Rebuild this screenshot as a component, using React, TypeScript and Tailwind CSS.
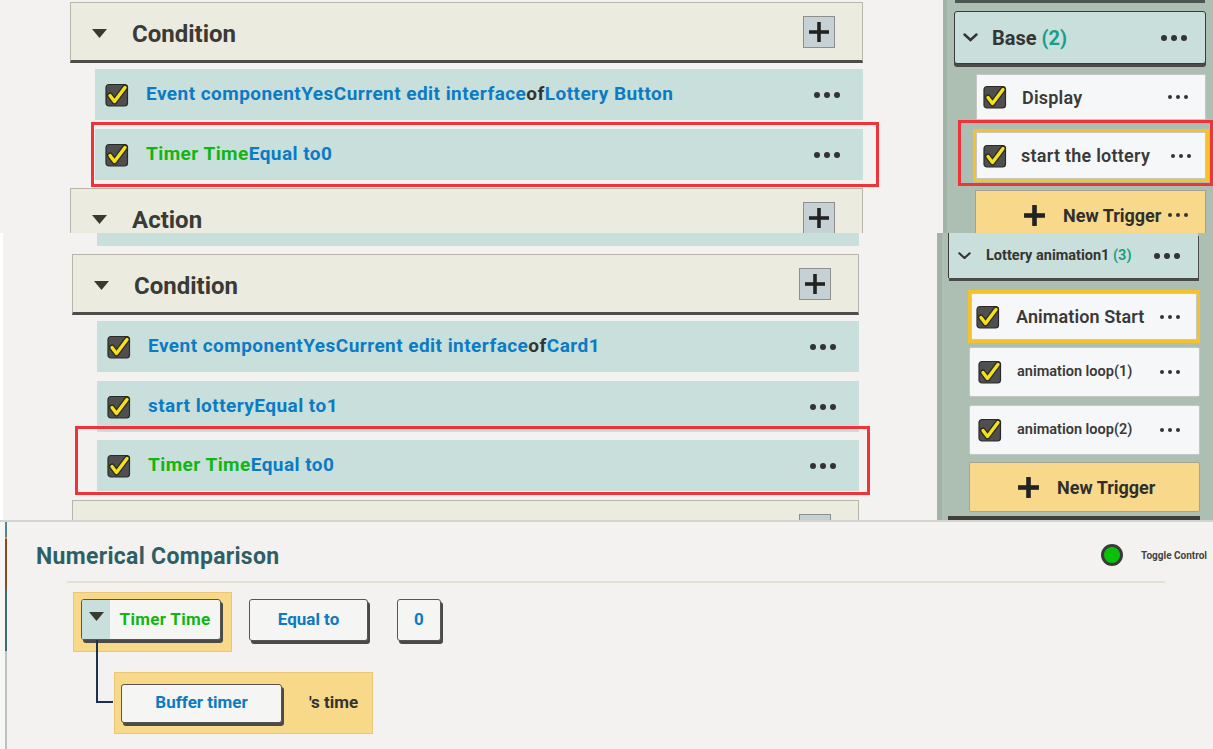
import React from 'react';

const FONT = "font-['Roboto','Liberation_Sans',sans-serif]";

const Check = ({ size = 24 }: { size?: number }) => (
    <svg width={size} height={size} viewBox="0 0 24 24" className="shrink-0">
        <rect x="1" y="1.5" width="21.5" height="21.5" rx="3" fill="#4f4f4f" stroke="#2a2a2a" strokeWidth="1.2" />
        <polyline points="5,12.5 9.5,18.5 20,4.5" fill="none" stroke="#2b2b20" strokeWidth="6" strokeLinecap="round" strokeLinejoin="round" />
        <polyline points="5,12.5 9.5,18.5 20,4.5" fill="none" stroke="#f4e11c" strokeWidth="3.4" strokeLinecap="round" strokeLinejoin="round" />
    </svg>
);

const Dots = ({ size = 6, gap = 4 }: { size?: number; gap?: number }) => (
    <div className="flex items-center" style={{ gap }}>
        {[0, 1, 2].map((i) => (
            <div key={i} className="rounded-full bg-[#333333]" style={{ width: size, height: size }} />
        ))}
    </div>
);

const Plus = ({ size = 22, stroke = 3.6 }: { size?: number; stroke?: number }) => (
    <svg width={size} height={size} viewBox="0 0 22 22" className="shrink-0">
        <line x1="11" y1="1" x2="11" y2="21" stroke="#222" strokeWidth={stroke} />
        <line x1="1" y1="11" x2="21" y2="11" stroke="#222" strokeWidth={stroke} />
    </svg>
);

const Triangle = () => (
    <svg width="15" height="9" viewBox="0 0 15 9" className="shrink-0">
        <polygon points="0,0 15,0 7.5,9" fill="#3a3a32" />
    </svg>
);

const Chevron = ({ w = 15 }: { w?: number }) => (
    <svg width={w} height={w * 0.6} viewBox="0 0 15 9" className="shrink-0">
        <polyline points="1.5,1.5 7.5,7 13.5,1.5" fill="none" stroke="#333" strokeWidth="2.4" strokeLinecap="round" />
    </svg>
);

const SectionHeader = ({ title, className = '' }: { title: string; className?: string }) => (
    <div className={`flex h-[61px] shrink-0 items-center border-x border-t border-[#b9b5aa] border-b-[3px] border-b-[#4d4d4a] bg-[#ecebe0] ${className}`}>
        <div className="ml-[21px] pt-[3px]"><Triangle /></div>
        <div className="ml-[25px] pt-[5px] text-[24px] font-bold text-[#3a3a36]">{title}</div>
        <div className="ml-auto mr-[27px] flex h-[32px] w-[32px] items-center justify-center border border-[#8e8e8a] bg-[#c6d1d6]">
            <Plus />
        </div>
    </div>
);

const CondRow = ({ children, className = '' }: { children: React.ReactNode; className?: string }) => (
    <div className={`flex h-[51px] shrink-0 items-center bg-[#c9dfdc] pl-[10px] pr-[23px] ${className}`}>
        <Check />
        <div className="ml-[17px] flex-1 whitespace-nowrap text-[19px] font-bold tracking-[0.45px] text-[#0b7bc4]">{children}</div>
        <Dots />
    </div>
);

const RedBox = ({ className }: { className: string }) => (
    <div className={`pointer-events-none absolute z-10 border-[3px] border-[#ef3338] ${className}`} />
);

const TriggerCard = ({ label, textClass, className = '' }: { label: string; textClass: string; className?: string }) => (
    <div className={`flex items-center border border-[#c4c7c4] bg-[#f6f7f9] ${className}`}>
        <Check />
        <div className={`flex-1 whitespace-nowrap text-[#3a3a38] ${textClass}`}>{label}</div>
        <Dots size={4} gap={4} />
    </div>
);

const ExprButton = ({ children, className = '' }: { children: React.ReactNode; className?: string }) => (
    <div className={`flex items-center justify-center rounded-[3px] border border-[#555552] bg-[#f5f5f3] shadow-[2px_3px_0_#4a4a46] ${className}`}>
        {children}
    </div>
);

export default function App() {
    return (
        <div className={`flex h-[749px] w-[1213px] flex-col overflow-hidden bg-[#f3f2f0] ${FONT}`}>
            {/* Band 1 */}
            <div className="flex h-[233px] shrink-0 overflow-hidden">
                <div className="w-[943px] shrink-0 overflow-hidden pl-[70px] pt-[2px]">
                    <div className="flex w-[793px] flex-col">
                        <SectionHeader title="Condition" />
                        <div className="ml-[25px] mt-[6px] flex flex-col gap-[9px]">
                            <CondRow>
                                Event componentYesCurrent edit interface<span className="text-[#333]">of</span>Lottery Button
                            </CondRow>
                            <div className="relative">
                                <CondRow>
                                    <span className="text-[#12b512]">Timer Time</span>Equal to0
                                </CondRow>
                                <RedBox className="-left-[4px] -right-[16px] -top-[7px] -bottom-[7px]" />
                            </div>
                        </div>
                        <SectionHeader title="Action" className="mt-[8px]" />
                    </div>
                </div>
                <div className="flex flex-1 flex-col border-l-[4px] border-[#a1b3a7] bg-[#adbfb3]">
                    <div className="ml-[8px] h-[3px] w-[250px] shrink-0 bg-[#4c5550]" />
                    <div className="ml-[7px] mt-[8px] flex h-[53px] w-[252px] shrink-0 items-center rounded-[3px] border border-[#3a3a3a] bg-[#c9dfdc] pl-[8px] pr-[18px] shadow-[0_3px_0_#4a4a48]">
                        <Chevron />
                        <div className="ml-[14px] flex-1 text-[20px] font-bold text-[#353532]">
                            Base <span className="text-[#189e8b]">(2)</span>
                        </div>
                        <Dots size={6} gap={4} />
                    </div>
                    <TriggerCard label="Display" textClass="ml-[15px] text-[18px] font-semibold tracking-[0.2px]" className="ml-[29px] mt-[10px] h-[46px] w-[230px] shrink-0 pl-[6px] pr-[17px]" />
                    <div className="relative ml-[26px] mt-[9px] h-[53px] w-[236px] shrink-0 border-[3px] border-[#f5c22c]">
                        <TriggerCard label="start the lottery" textClass="ml-[14px] text-[18px] font-semibold tracking-[0.25px]" className="h-full w-full pl-[6px] pr-[14px]" />
                        <RedBox className="-left-[18px] -right-[7px] -top-[12px] -bottom-[7px]" />
                    </div>
                    <div className="ml-[28px] mt-[8px] flex h-[50px] w-[231px] shrink-0 items-center border border-[#a9a28c] bg-[#f8d98b] pl-[47px] pr-[17px]">
                        <Plus size={23} stroke={4.4} />
                        <div className="ml-[17px] flex-1 text-[18px] font-bold text-[#2f2f2c]">New Trigger</div>
                        <Dots size={4} gap={4} />
                    </div>
                </div>
            </div>

            {/* Band 2 */}
            <div className="flex h-[287px] shrink-0 overflow-hidden">
                <div className="w-[3px] shrink-0 bg-white" />
                <div className="w-[934px] shrink-0 overflow-hidden">
                    <div className="ml-[94px] h-[13px] w-[762px] bg-[#c9dfdc]" />
                    <div className="ml-[69px] mt-[8px] flex w-[787px] flex-col">
                        <SectionHeader title="Condition" />
                        <div className="ml-[25px] mt-[6px] flex flex-col">
                            <CondRow className="h-[50px]">
                                Event componentYesCurrent edit interface<span className="text-[#333]">of</span>Card1
                            </CondRow>
                            <CondRow className="mt-[9px] h-[50px]">start lotteryEqual to1</CondRow>
                            <div className="relative mt-[8px]">
                                <CondRow className="h-[50px]">
                                    <span className="text-[#12b512]">Timer Time</span>Equal to0
                                </CondRow>
                                <RedBox className="-left-[22px] -right-[11px] -top-[14px] -bottom-[4px]" />
                            </div>
                        </div>
                        <SectionHeader title="" className="mt-[9px]" />
                    </div>
                </div>
                <div className="flex flex-1 flex-col border-l-[5px] border-[#a1b3a7] bg-[#adbfb3]">
                    <div className="ml-[6px] flex h-[45px] w-[250px] shrink-0 items-center border-l border-[#3a3a3a] bg-[#c9dfdc] pl-[9px] pr-[18px] shadow-[1px_3px_0_#4a4a48]">
                        <Chevron w={13} />
                        <div className="ml-[15px] flex-1 whitespace-nowrap text-[14.5px] font-bold text-[#353532]">
                            Lottery animation1 <span className="text-[#189e8b]">(3)</span>
                        </div>
                        <Dots size={6} gap={4} />
                    </div>
                    <div className="ml-[26px] mt-[12px] h-[53px] w-[232px] shrink-0 border-[3px] border-[#f5c22c]">
                        <TriggerCard label="Animation Start" textClass="ml-[16px] text-[18px] font-semibold tracking-[0.1px]" className="h-full w-full pl-[4px] pr-[16px]" />
                    </div>
                    <TriggerCard label="animation loop(1)" textClass="ml-[15px] text-[14.5px] font-semibold" className="ml-[27px] mt-[4px] h-[50px] w-[231px] shrink-0 rounded-[2px] border-[#b4b8b4] pl-[8px] pr-[19px]" />
                    <TriggerCard label="animation loop(2)" textClass="ml-[15px] text-[14.5px] font-semibold" className="ml-[27px] mt-[8px] h-[50px] w-[231px] shrink-0 rounded-[2px] border-[#b4b8b4] pl-[8px] pr-[19px]" />
                    <div className="ml-[27px] mt-[7px] flex h-[50px] w-[231px] shrink-0 items-center rounded-[2px] border border-[#a9a28c] bg-[#f8d98b] pl-[47px]">
                        <Plus size={23} stroke={4.4} />
                        <div className="ml-[17px] text-[18px] font-bold text-[#2f2f2c]">New Trigger</div>
                    </div>
                    <div className="ml-[6px] mt-[4px] h-[4px] w-[252px] shrink-0 bg-[#3d403d]" />
                </div>
            </div>

            {/* Band 3 */}
            <div className="flex flex-1 border-t-2 border-[#d4d4d0]">
                <div className="w-[5px] shrink-0 bg-[#f6f6f5]" />
                <div className="flex w-[2px] shrink-0 flex-col">
                    <div className="h-[15px] bg-[#4d8a8c]" />
                    <div className="h-[2px] bg-[#f08a1c]" />
                    <div className="h-[50px] bg-[#8a4a1c]" />
                    <div className="h-[62px] bg-[#3d6b6e]" />
                    <div className="flex-1 bg-[#b9c2c0]" />
                </div>
                <div className="flex flex-1 flex-col pl-[29px]">
                    <div className="mt-[11px] flex h-[44px] items-center pr-[6px]">
                        <div className="pt-[4px] text-[23px] font-bold tracking-[0.3px] text-[#2f5f66]">Numerical Comparison</div>
                        <div className="ml-auto mr-[1px] h-[22px] w-[22px] rounded-full border-[3px] border-[#3a3a3a] bg-[#08c108]" />
                        <div className="ml-[17px] text-[10px] font-bold text-[#444]">Toggle Control</div>
                    </div>
                    <div className="ml-[31px] mt-[4px] h-[2px] w-[1098px] bg-[#dfe3d3]" />
                    <div className="ml-[37px] mt-[9px] flex items-start">
                        <div className="h-[60px] w-[159px] border border-[#e8c878] bg-[#f8d98a] pl-[7px] pt-[6px]">
                            <div className="flex h-[41px] w-[140px] overflow-hidden rounded-[3px] border border-[#555552] bg-[#f5f5f3] shadow-[2px_3px_0_#4a4a46]">
                                <div className="flex w-[28px] items-start justify-center bg-[#c9dfdc] pt-[12px]">
                                    <Triangle />
                                </div>
                                <div className="flex flex-1 items-center justify-center text-[17px] font-bold tracking-[0.3px] text-[#12b512]">Timer Time</div>
                            </div>
                        </div>
                        <ExprButton className="ml-[17px] mt-[7px] h-[42px] w-[119px] text-[17px] font-bold text-[#0b7bc4]">Equal to</ExprButton>
                        <ExprButton className="ml-[29px] mt-[7px] h-[42px] w-[44px] text-[17px] font-bold text-[#0b7bc4]">0</ExprButton>
                    </div>
                    <div className="ml-[37px] mt-[20px] flex items-start">
                        <div className="-mt-[32px] ml-[23px] h-[63px] w-[17px] shrink-0 border-b-2 border-l-2 border-[#1d3050]" />
                        <div className="ml-[1px] flex h-[62px] w-[259px] items-center border border-[#e8c878] bg-[#f8d98a] pl-[6px]">
                            <ExprButton className="h-[39px] w-[161px] text-[17px] font-bold text-[#0b7bc4]">Buffer timer</ExprButton>
                            <div className="ml-[27px] text-[17px] font-bold text-[#333]">'s time</div>
                        </div>
                    </div>
                </div>
            </div>
        </div>
    );
}
